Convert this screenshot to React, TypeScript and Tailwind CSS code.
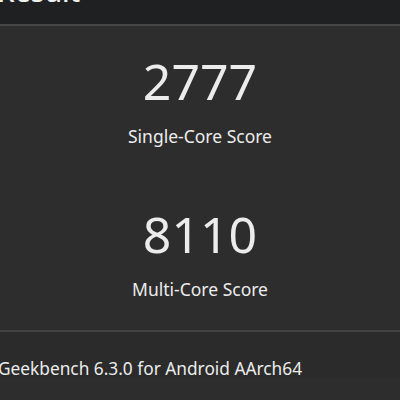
export default function App() {
  return (
    <div className="h-[400px] w-[400px] overflow-hidden bg-[#2d2d2d] text-[#ececec]" style={{ fontFamily: '"Noto Sans", "Open Sans", sans-serif' }}>
      <header className="h-[26px] overflow-hidden border-b-2 border-[#464646] bg-[#1f2022]">
        <h1 className="-ml-[3px] -mt-[27px] text-[28px] font-medium leading-[36px] text-[#f0f0f0]">Result</h1>
      </header>
      <section className="flex flex-col items-center pb-[32px] pt-[30px]">
        <div className="flex flex-col items-center">
          <div className="text-[50px] leading-none">2777</div>
          <div className="mt-[22px] text-[17.5px] leading-none">Single-Core Score</div>
        </div>
        <div className="mt-[63px] flex flex-col items-center">
          <div className="text-[50px] leading-none">8110</div>
          <div className="mt-[22px] text-[17.5px] leading-none">Multi-Core Score</div>
        </div>
      </section>
      <footer className="border-t-2 border-[#434343] bg-[#2b2b2b] pt-[28px]">
        <p className="-ml-[2px] text-[17.3px] leading-none">Geekbench 6.3.0 for Android AArch64</p>
      </footer>
    </div>
  );
}
